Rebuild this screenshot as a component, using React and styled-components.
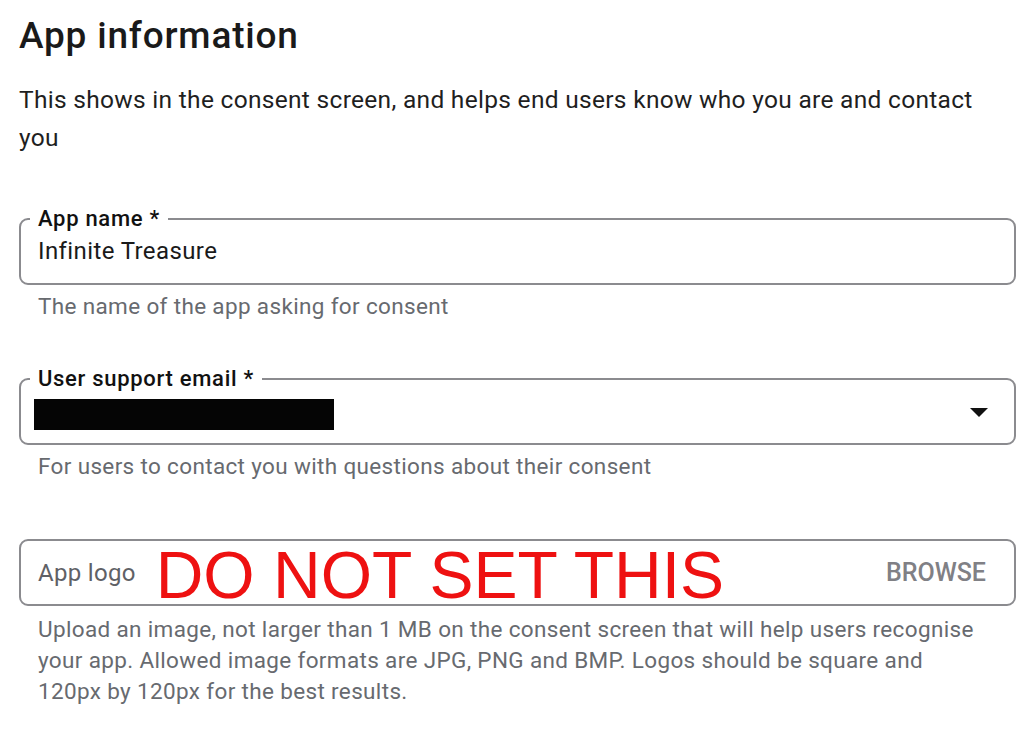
import styled, { createGlobalStyle } from "styled-components";

const GlobalStyle = createGlobalStyle`
    body {
        margin: 0;
        background: #ffffff;
        font-family: Roboto, "Noto Sans", Arial, sans-serif;
        color: #202124;
    }
`;

const Page = styled.div`
    width: 997px;
    padding: 14px 0 0 19px;
`;

const Title = styled.h1`
    margin: 0;
    font-size: 37px;
    line-height: 44px;
    font-weight: 500;
    letter-spacing: 0.8px;
    color: #1a1a1a;
`;

const Intro = styled.p`
    margin: 23px 0 0;
    font-size: 24.5px;
    line-height: 38px;
    letter-spacing: 0.3px;
    color: #1f1f1f;
    padding-right: 20px;
`;

const FieldGroup = styled.div`
    margin-top: ${({ $top }) => $top}px;
`;

const Outline = styled.fieldset`
    margin: 0;
    height: 67px;
    box-sizing: border-box;
    border: 2px solid #8b8b8f;
    border-radius: 9px;
    padding: 0 18px 0 17px;
    display: flex;
    align-items: center;
    gap: 20px;
`;

const Legend = styled.legend`
    margin-left: -8px;
    padding: 0 8px;
    font-size: 22px;
    line-height: 2px;
    height: 2px;
    font-weight: 500;
    letter-spacing: 0.7px;
    color: #111;
    white-space: nowrap;
`;

const Value = styled.div`
    flex: 1;
    font-size: 24px;
    letter-spacing: 0.4px;
    color: #1a1a1a;
    margin-top: ${({ $shift }) => $shift || 0}px;
`;

const Redacted = styled.div`
    width: 300px;
    height: 31px;
    background: #050505;
    margin-left: -4px;
`;

const Caret = styled.svg`
    width: 18px;
    height: 9px;
    margin-right: 8px;
    margin-top: 2px;
`;

const Placeholder = styled.span`
    font-size: 24px;
    letter-spacing: 0.3px;
    color: #5f6166;
`;

const Warning = styled.span`
    flex: 1;
    font-family: "Liberation Sans", Arial, sans-serif;
    font-size: 66px;
    line-height: 60px;
    color: #ee1111;
    margin-top: 4px;
`;

const Browse = styled.span`
    font-size: 25px;
    font-weight: 500;
    color: #808085;
    margin-right: 10px;
`;

const Hint = styled.div`
    padding: 0 20px 0 19px;
    margin-top: ${({ $top }) => $top}px;
    font-size: 22.5px;
    line-height: 31px;
    letter-spacing: 0.35px;
    color: #676a6f;
`;

const fields = [
    { label: "App name *", value: "Infinite Treasure", hint: "The name of the app asking for consent", top: 61 },
    { label: "User support email *", select: true, hint: "For users to contact you with questions about their consent", top: 56 },
];

export default function App() {
    return (
        <>
            <GlobalStyle />
            <Page>
                <Title>App information</Title>
                <Intro>
                    This shows in the consent screen, and helps end users know who you are and contact you
                </Intro>

                {fields.map((field) => (
                    <FieldGroup key={field.label} $top={field.top}>
                        <Outline>
                            <Legend>{field.label}</Legend>
                            {field.select ? (
                                <>
                                    <Value $shift={6}>
                                        <Redacted />
                                    </Value>
                                    <Caret viewBox="0 0 18 9">
                                        <path d="M0 0 L18 0 L9 9 Z" fill="#111" />
                                    </Caret>
                                </>
                            ) : (
                                <Value $shift={-2}>{field.value}</Value>
                            )}
                        </Outline>
                        <Hint $top={6}>{field.hint}</Hint>
                    </FieldGroup>
                ))}

                <FieldGroup $top={57}>
                    <Outline>
                        <Placeholder>App logo</Placeholder>
                        <Warning>DO NOT SET THIS</Warning>
                        <Browse>BROWSE</Browse>
                    </Outline>
                    <Hint $top={8}>
                        Upload an image, not larger than 1 MB on the consent screen that will help users recognise
                        <br />
                        your app. Allowed image formats are JPG, PNG and BMP. Logos should be square and
                        <br />
                        120px by 120px for the best results.
                    </Hint>
                </FieldGroup>
            </Page>
        </>
    );
}
